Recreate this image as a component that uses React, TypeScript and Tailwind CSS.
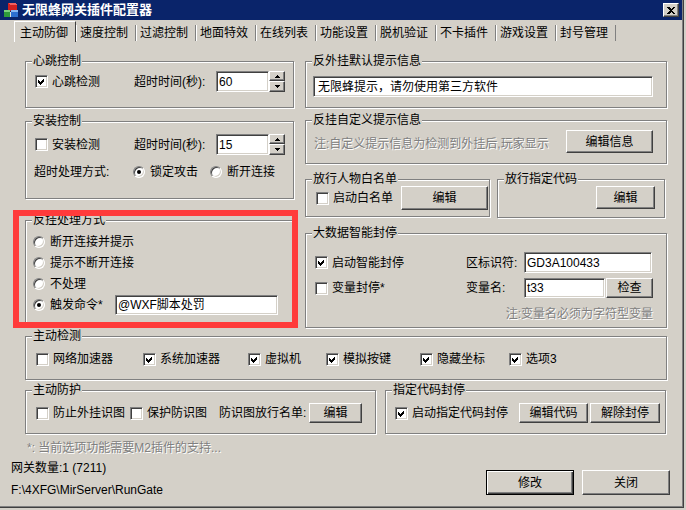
import type { ReactNode } from "react";

const sunken =
  "bg-white border border-t-[#808080] border-l-[#808080] border-r-white border-b-white shadow-[inset_1px_1px_0_#404040,inset_-1px_-1px_0_#d4d0c8]";
const raised =
  "bg-[#d4d0c8] border border-t-white border-l-white border-r-[#404040] border-b-[#404040] shadow-[inset_-1px_-1px_0_#808080]";

function Group({ title, className = "", children }: { title: string; className?: string; children?: ReactNode }) {
  return (
    <div className={`relative border border-[#808080] shadow-[inset_1px_1px_0_#fff,1px_1px_0_#fff] ${className}`}>
      <span className="absolute -top-[8px] left-[6px] bg-[#d4d0c8] px-[1px] leading-[14px]">{title}</span>
      {children}
    </div>
  );
}

function Box({ checked = false }: { checked?: boolean }) {
  return (
    <span className={`relative inline-block w-[13px] h-[13px] shrink-0 ${sunken}`}>
      {checked && (
        <svg className="absolute left-[2px] top-[2px]" width="7" height="7" viewBox="0 0 7 7" shapeRendering="crispEdges">
          <path d="M0 2L2 4L6 0L6 3L2 7L0 5Z" fill="#000" />
        </svg>
      )}
    </span>
  );
}

function Check({ checked = false, label, className = "" }: { checked?: boolean; label: string; className?: string }) {
  return (
    <div className={`flex items-center shrink-0 ${className}`}>
      <Box checked={checked} />
      <span className="ml-[4px]">{label}</span>
    </div>
  );
}

function Radio({ on = false, label, className = "" }: { on?: boolean; label: string; className?: string }) {
  return (
    <div className={`flex items-center shrink-0 ${className}`}>
      <span className="relative w-[12px] h-[12px] shrink-0 rounded-full bg-white border border-t-[#808080] border-l-[#808080] border-r-white border-b-white shadow-[inset_1px_1px_0_#404040,inset_-1px_-1px_0_#d4d0c8]">
        {on && <span className="absolute left-[3px] top-[3px] w-[4px] h-[4px] rounded-full bg-black" />}
      </span>
      <span className="ml-[5px]">{label}</span>
    </div>
  );
}

function Field({ value = "", className = "" }: { value?: string; className?: string }) {
  return <div className={`flex items-center shrink-0 pl-[2px] ${sunken} ${className}`}>{value}</div>;
}

function Btn({ label, className = "" }: { label: string; className?: string }) {
  return <div className={`flex items-center justify-center shrink-0 ${raised} ${className}`}>{label}</div>;
}

function Spin() {
  return (
    <div className="flex flex-col w-[16px] h-[21px] shrink-0">
      <div className={`h-[10px] flex items-center justify-center ${raised}`}>
        <svg width="5" height="3" viewBox="0 0 5 3" shapeRendering="crispEdges">
          <path d="M2 0h1v1h1v1h1v1H0V2h1V1h1z" fill="#000" />
        </svg>
      </div>
      <div className={`h-[11px] flex items-center justify-center ${raised}`}>
        <svg width="5" height="3" viewBox="0 0 5 3" shapeRendering="crispEdges">
          <path d="M0 0h5v1H4v1H3v1H2V2H1V1H0z" fill="#000" />
        </svg>
      </div>
    </div>
  );
}

function Disabled({ children, className = "" }: { children: ReactNode; className?: string }) {
  return <span className={`text-[#808080] [text-shadow:1px_1px_0_#fff] ${className}`}>{children}</span>;
}

function AppIcon() {
  return (
    <svg width="16" height="16" viewBox="0 0 16 16" shapeRendering="crispEdges">
      <path d="M5 1h7l2 2v6H5z" fill="#d02020" />
      <path d="M5 1h7l2 2H7z" fill="#f06060" />
      <path d="M1 8h6v7H1z" fill="#2e9a3a" />
      <path d="M1 8h6v2H1z" fill="#7cd07c" />
      <path d="M8 8h7v7H8z" fill="#2d6fd0" />
      <path d="M8 8h7v2H8z" fill="#8ab8f0" />
      <path d="M7 10h1v5H7z" fill="#e0e0e0" />
    </svg>
  );
}

const tabs = ["速度控制", "过滤控制", "地面特效", "在线列表", "功能设置", "脱机验证", "不卡插件", "游戏设置", "封号管理"];

export default function App() {
  return (
    <div className="w-[686px] h-[510px] bg-[#d4d0c8] text-[12px] leading-[14px] text-black font-['Liberation_Sans','Noto_Sans_CJK_SC',sans-serif]">
      <div className="w-[684px] h-[508px] flex flex-col shadow-[inset_-1px_-1px_0_#404040,inset_-2px_-2px_0_#808080]">
        {/* title bar */}
        <div className="h-[20px] mr-[2px] bg-[#0a246a] flex items-center pl-[3px] pr-[3px]">
          <AppIcon />
          <span className="ml-[3px] text-white font-bold text-[13px]">无限蜂网关插件配置器</span>
          <div className={`ml-auto w-[16px] h-[14px] flex items-center justify-center ${raised}`}>
            <svg width="8" height="7" viewBox="0 0 8 7" shapeRendering="crispEdges">
              <path d="M0 0h2l2 2 2-2h2L5 3.5 8 7H6L4 5 2 7H0l3-3.5z" fill="#000" />
            </svg>
          </div>
        </div>

        {/* tabs */}
        <div className="flex mt-[1px] h-[21px] pl-[14px]">
          <div className="w-[62px] h-[21px] border-l border-t border-l-white border-t-white border-r border-r-[#404040] pl-[5px] pt-[4px]">
            主动防御
          </div>
          {tabs.map((t) => (
            <div key={t} className="w-[60px] h-[16px] mt-[4px] border-l border-l-white border-r border-r-[#808080] pl-[3px] leading-[16px]">
              {t}
            </div>
          ))}
        </div>

        {/* content */}
        <div className="pl-[25px] pt-[19px]">
          <div className="flex">
            {/* left column */}
            <div className="relative w-[269px]">
              <Group title="心跳控制" className="h-[47px]">
                <div className="flex items-center pl-[9px] pt-[9px]">
                  <Check checked label="心跳检测" className="w-[99px]" />
                  <span className="w-[82px]">超时时间(秒):</span>
                  <Field value="60" className="w-[53px] h-[21px]" />
                  <Spin />
                </div>
              </Group>

              <Group title="安装控制" className="mt-[13px] h-[78px]">
                <div className="flex items-center pl-[9px] pt-[12px]">
                  <Check label="安装检测" className="w-[99px]" />
                  <span className="w-[82px]">超时时间(秒):</span>
                  <Field value="15" className="w-[53px] h-[21px]" />
                  <Spin />
                </div>
                <div className="flex items-center h-[13px] pl-[8px] mt-[10px]">
                  <span className="w-[99px]">超时处理方式:</span>
                  <Radio on label="锁定攻击" className="w-[77px]" />
                  <Radio label="断开连接" />
                </div>
              </Group>

              <Group title="反挂处理方式" className="mt-[21px] h-[103px]">
                <div className="flex flex-col pl-[7px] pt-[10px]">
                  <div className="h-[21px] flex items-center">
                    <Radio label="断开连接并提示" />
                  </div>
                  <div className="h-[21px] flex items-center">
                    <Radio label="提示不断开连接" />
                  </div>
                  <div className="h-[21px] flex items-center">
                    <Radio label="不处理" />
                  </div>
                  <div className="h-[21px] flex items-center">
                    <Radio on label="触发命令*" className="w-[82px]" />
                    <Field value="@WXF脚本处罚" className="w-[163px] h-[20px]" />
                  </div>
                </div>
              </Group>

              {/* red highlight drawn over the group */}
              <div className="absolute left-[-12px] top-[149px] w-[285px] h-[118px] border-[6px] border-[#ff3b3b]" />
            </div>

            {/* right column */}
            <div className="ml-[11px] w-[362px]">
              <Group title="反外挂默认提示信息" className="h-[47px]">
                <div className="pl-[7px] pt-[14px]">
                  <Field value="无限蜂提示，请勿使用第三方软件" className="w-[340px] h-[21px] pl-[4px]" />
                </div>
              </Group>

              <Group title="反挂自定义提示信息" className="mt-[12px] h-[44px]">
                <div className="flex items-center pl-[8px] pt-[9px] pr-[13px]">
                  <Disabled className="mt-[5px]">注:自定义提示信息为检测到外挂后,玩家显示</Disabled>
                  <Btn label="编辑信息" className="ml-auto w-[87px] h-[23px]" />
                </div>
              </Group>

              <div className="flex gap-[7px] mt-[15px]">
                <Group title="放行人物白名单" className="w-[185px] h-[38px]">
                  <div className="flex items-center pl-[10px] pt-[6px] pr-[1px]">
                    <Check label="启动白名单" />
                    <Btn label="编辑" className="ml-auto w-[87px] h-[24px]" />
                  </div>
                </Group>
                <Group title="放行指定代码" className="w-[168px] h-[39px]">
                  <div className="flex justify-end pt-[6px] pr-[9px]">
                    <Btn label="编辑" className="w-[59px] h-[23px]" />
                  </div>
                </Group>
              </div>

              <Group title="大数据智能封停" className="mt-[15px] h-[95px]">
                <div className="pl-[9px] pt-[18px] pr-[13px]">
                  <div className="flex items-center h-[21px]">
                    <Check checked label="启动智能封停" className="w-[151px]" />
                    <span className="w-[58px]">区标识符:</span>
                    <Field value="GD3A100433" className="w-[128px] h-[21px]" />
                  </div>
                  <div className="flex items-center h-[20px] mt-[5px]">
                    <Check label="变量封停*" className="w-[151px]" />
                    <span className="w-[58px]">变量名:</span>
                    <Field value="t33" className="w-[81px] h-[20px]" />
                    <Btn label="检查" className="ml-[1px] w-[47px] h-[20px]" />
                  </div>
                  <div className="mt-[9px] text-right">
                    <Disabled>注:变量名必须为字符型变量</Disabled>
                  </div>
                </div>
              </Group>
            </div>
          </div>

          <Group title="主动检测" className="mt-[8px] w-[642px] h-[44px]">
            <div className="flex items-center pl-[10px] pt-[15px]">
              <Check label="网络加速器" className="w-[107px]" />
              <Check checked label="系统加速器" className="w-[105px]" />
              <Check checked label="虚拟机" className="w-[78px]" />
              <Check checked label="模拟按键" className="w-[94px]" />
              <Check checked label="隐藏坐标" className="w-[89px]" />
              <Check checked label="选项3" />
            </div>
          </Group>

          <div className="flex mt-[10px]">
            <Group title="主动防护" className="w-[351px] h-[44px]">
              <div className="flex items-center pl-[10px] pt-[12px]">
                <Check label="防止外挂识图" className="w-[94px]" />
                <Check label="保护防识图" className="w-[89px]" />
                <span className="w-[90px]">防识图放行名单:</span>
                <Btn label="编辑" className="w-[53px] h-[20px]" />
              </div>
            </Group>
            <Group title="指定代码封停" className="ml-[9px] w-[281px] h-[44px]">
              <div className="flex items-center pl-[9px] pt-[12px]">
                <Check checked label="启动指定代码封停" className="w-[124px]" />
                <Btn label="编辑代码" className="w-[69px] h-[20px]" />
                <Btn label="解除封停" className="ml-[2px] w-[70px] h-[20px]" />
              </div>
            </Group>
          </div>
        </div>

        {/* footer */}
        <div className="pl-[27px] mt-[7px] h-[14px]">
          <Disabled>*: 当前选项功能需要M2插件的支持...</Disabled>
        </div>
        <div className="flex">
          <div className="pl-[11px] pt-[6px]">
            <div className="h-[14px]">网关数量:1 (7211)</div>
            <div className="h-[14px] mt-[8px]">F:\4XFG\MirServer\RunGate</div>
          </div>
          <div className="ml-auto pr-[14px] pt-[15px] flex gap-[8px]">
            <div className="w-[88px] h-[25px] flex items-center justify-center bg-[#d4d0c8] border border-black shadow-[inset_1px_1px_0_#fff,inset_-1px_-1px_0_#404040,inset_-2px_-2px_0_#808080]">
              修改
            </div>
            <Btn label="关闭" className="w-[88px] h-[25px]" />
          </div>
        </div>
      </div>
    </div>
  );
}
